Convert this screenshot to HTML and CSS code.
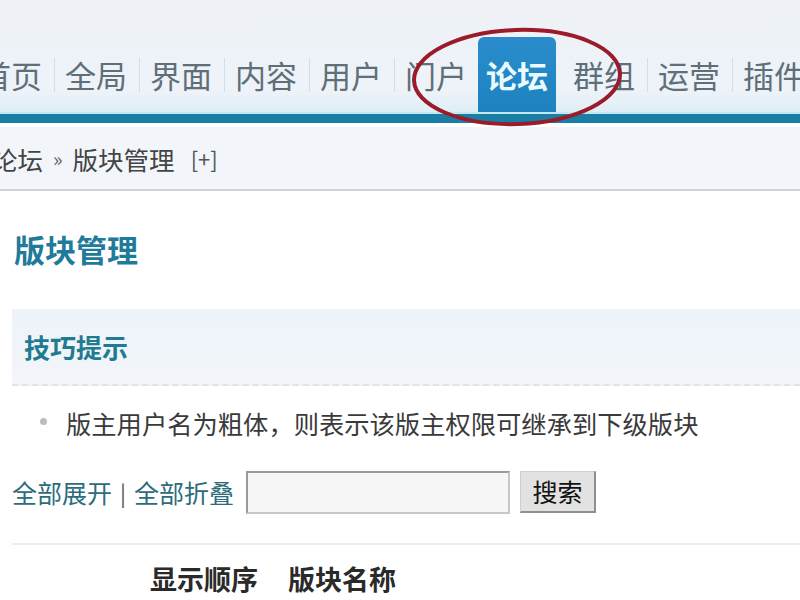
FILE: index.html
```html
<!DOCTYPE html>
<html lang="zh-CN">
<head>
<meta charset="utf-8">
<title>版块管理</title>
<link rel="stylesheet" href="styles.css">
</head>
<body>
<header class="top">
  <nav class="menu">
    <a class="item">首页</a>
    <a class="item sep">全局</a>
    <a class="item sep">界面</a>
    <a class="item sep">内容</a>
    <a class="item sep">用户</a>
    <a class="item sep">门户</a>
    <a class="item active">论坛</a>
    <a class="item">群组</a>
    <a class="item sep">运营</a>
    <a class="item sep">插件</a>
  </nav>
  <svg class="mark" width="240" height="120" viewBox="0 0 240 120">
    <ellipse cx="120" cy="60" rx="103" ry="47" fill="none" stroke="#9b1b2a" stroke-width="4" transform="rotate(-2 120 60)"/>
  </svg>
</header>
<div class="bar"></div>
<div class="crumb">
  <span class="c1">论坛</span><span class="raquo">»</span><span class="c2">版块管理</span><span class="plus">[+]</span>
</div>
<main class="content">
  <h1 class="title">版块管理</h1>
  <div class="tips"><h2>技巧提示</h2></div>
  <ul class="tiplist">
    <li>版主用户名为粗体，则表示该版主权限可继承到下级版块</li>
  </ul>
  <div class="tools">
    <a class="lnk">全部展开</a><span class="pipe">|</span><a class="lnk">全部折叠</a>
    <input class="txt" type="text">
    <button class="btn">搜索</button>
  </div>
  <div class="rule"></div>
  <div class="thead">
    <span class="col1">显示顺序</span><span class="col2">版块名称</span>
  </div>
</main>
</body>
</html>
```
FILE: styles.css
```css
html, body {
  margin: 0;
  padding: 0;
  background: #ffffff;
  overflow: hidden;
  width: 800px;
  height: 600px;
  font-family: "Noto Sans CJK SC", "Noto Sans", sans-serif;
}

.top {
  position: relative;
  height: 112px;
  background: linear-gradient(#eef2f7, #eef3f9 80%, #dfeef6);
  box-sizing: border-box;
  padding-top: 37px;
}

.menu {
  display: flex;
  align-items: stretch;
  height: 75px;
  margin-left: -31px;
  white-space: nowrap;
}

.item {
  display: flex;
  align-items: center;
  padding: 0 11px;
  font-size: 31px;
  color: #5f6f78;
  line-height: 1;
}

.item.sep {
  border-left: 1px solid transparent;
  background: linear-gradient(#d6dce2, #d6dce2) left center / 1px 34px no-repeat;
}

.item.active {
  background: linear-gradient(#2a8ccc, #1d82bf);
  color: #e9fbff;
  border-radius: 6px 6px 0 0;
  font-weight: bold;
  padding: 0 8px;
  margin-right: 6px;
}

.mark {
  position: absolute;
  left: 397px;
  top: 17px;
}

.bar {
  height: 9px;
  background: #1a7fa4;
  border-top: 2px solid #c4e8f2;
}

.crumb {
  margin-top: 4px;
  height: 62px;
  background: #f2f6fa;
  border-bottom: 2px solid #cfd3d7;
  display: flex;
  align-items: center;
  font-size: 25.5px;
  color: #444;
  margin-left: -8px;
  white-space: nowrap;
}

.raquo {
  font-size: 20px;
  margin: 0 10px 0 10px;
  color: #666;
}

.plus {
  font-size: 22px;
  margin-left: 16px;
  color: #555;
}

.content {
  padding: 0 0 0 12px;
}

.title {
  margin: 38px 0 0 2px;
  font-size: 31px;
  line-height: 40px;
  font-weight: bold;
  color: #1f7b99;
}

.tips {
  margin-top: 40px;
  height: 75px;
  background: linear-gradient(#eef3f9, #f2f6fb);
  border-bottom: 2px dashed #e0e4e8;
  display: flex;
  align-items: center;
  padding-left: 12px;
}

.tips h2 {
  margin: 0;
  font-size: 26px;
  font-weight: bold;
  color: #1f7b90;
}

.tiplist {
  list-style: none;
  margin: 19px 0 0 0;
  padding: 0 0 0 28px;
}

.tiplist li {
  position: relative;
  padding-left: 26px;
  font-size: 25.3px;
  line-height: 36px;
  color: #3a3a3a;
}

.tiplist li::before {
  content: "";
  position: absolute;
  left: 0;
  top: 13px;
  width: 7px;
  height: 7px;
  border-radius: 50%;
  background: #bdbdbd;
}

.tools {
  margin-top: 28px;
  display: flex;
  align-items: center;
  height: 46px;
}

.lnk {
  font-size: 25px;
  color: #2c6c7c;
}

.pipe {
  font-size: 22px;
  color: #555;
  margin: 0 8px;
}

.txt {
  margin-left: 12px;
  width: 264px;
  height: 43px;
  box-sizing: border-box;
  border: 2px solid #9a9a9a;
  border-right-color: #c8c8c8;
  border-bottom-color: #c8c8c8;
  background: #f6f6f6;
  padding: 0;
}

.btn {
  margin-left: 10px;
  width: 76px;
  height: 42px;
  box-sizing: border-box;
  font-family: "Noto Sans CJK SC", sans-serif;
  font-size: 25px;
  color: #111;
  background: #e2e2e2;
  border: 1px solid #cfcfcf;
  border-right: 2px solid #8f8f8f;
  border-bottom: 2px solid #8f8f8f;
  padding: 0;
  line-height: 1;
}

.rule {
  margin-top: 28px;
  height: 2px;
  background: #ececec;
}

.thead {
  margin-top: 14px;
  padding-left: 138px;
  display: flex;
  font-size: 27px;
  font-weight: bold;
  color: #2a2a2a;
  white-space: nowrap;
}

.col2 {
  margin-left: 30px;
}
```
